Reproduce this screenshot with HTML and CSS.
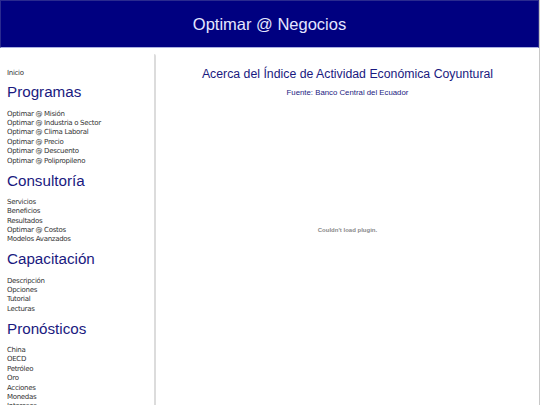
FILE: index.html
```html
<!DOCTYPE html>
<html lang="es">
<head>
<meta charset="utf-8">
<title>Optimar @ Negocios</title>
<link rel="stylesheet" href="styles.css">
</head>
<body>
<div class="page">
  <header class="top">Optimar @ Negocios</header>
  <div class="main">
    <nav class="side">
      <a class="item first">Inicio</a>
      <h2 class="head">Programas</h2>
      <a class="item">Optimar @ Misión</a>
      <a class="item">Optimar @ Industria o Sector</a>
      <a class="item">Optimar @ Clima Laboral</a>
      <a class="item">Optimar @ Precio</a>
      <a class="item">Optimar @ Descuento</a>
      <a class="item">Optimar @ Polipropileno</a>
      <h2 class="head">Consultoría</h2>
      <a class="item">Servicios</a>
      <a class="item">Beneficios</a>
      <a class="item">Resultados</a>
      <a class="item">Optimar @ Costos</a>
      <a class="item">Modelos Avanzados</a>
      <h2 class="head">Capacitación</h2>
      <a class="item">Descripción</a>
      <a class="item">Opciones</a>
      <a class="item">Tutorial</a>
      <a class="item">Lecturas</a>
      <h2 class="head">Pronósticos</h2>
      <a class="item">China</a>
      <a class="item">OECD</a>
      <a class="item">Petróleo</a>
      <a class="item">Oro</a>
      <a class="item">Acciones</a>
      <a class="item">Monedas</a>
      <a class="item">Intereses</a>
    </nav>
    <section class="content">
      <h1 class="title">Acerca del Índice de Actividad Económica Coyuntural</h1>
      <p class="source">Fuente: Banco Central del Ecuador</p>
      <div class="plugin">Couldn't load plugin.</div>
    </section>
  </div>
</div>
</body>
</html>
```
FILE: styles.css
```css
html, body {
  margin: 0;
  padding: 0;
  background: #ffffff;
  overflow: hidden;
}
.page {
  width: 540px;
  height: 405px;
  display: flex;
  flex-direction: column;
  box-sizing: border-box;
  border-right: 1px solid #c8c8c8;
}
.top {
  flex: none;
  height: 48px;
  box-sizing: border-box;
  background: #000080;
  border: 1px solid #2a2a8f;
  border-bottom-color: #aab0e0;
  color: #e4e6ff;
  font-family: "Liberation Sans", Arial, sans-serif;
  font-size: 16.5px;
  display: flex;
  align-items: center;
  justify-content: center;
}
.main {
  flex: 1;
  display: flex;
  min-height: 0;
}
.side {
  width: 147px;
  flex: none;
  margin-top: 6px;
  padding: 15px 0 0 7px;
  border-right: 2px solid #dcdcdc;
  border-top-right-radius: 2px;
  display: flex;
  flex-direction: column;
  font-family: "DejaVu Sans", Verdana, sans-serif;
  font-size: 7px;
  letter-spacing: -0.3px;
  color: #333333;
}
.item {
  display: block;
  line-height: 9.4px;
  height: 9.4px;
  flex: none;
  white-space: nowrap;
}
.head {
  flex: none;
  margin: 4.7px 0 7.2px 0;
  font-family: "Liberation Sans", Arial, sans-serif;
  font-weight: normal;
  font-size: 15.2px;
  letter-spacing: 0;
  line-height: 20px;
  color: #1a1a80;
}
.first + .head {
  margin-top: 4px;
}
.content {
  flex: 1;
  display: flex;
  flex-direction: column;
  align-items: center;
  font-family: "Liberation Sans", Arial, sans-serif;
  color: #1a1a80;
}
.title {
  margin: 18px 0 0 0;
  font-weight: normal;
  font-size: 12.3px;
  line-height: 16px;
}
.source {
  margin: 6px 0 0 0;
  font-size: 7.8px;
  line-height: 10px;
}
.plugin {
  margin-top: 129px;
  font-size: 6px;
  font-weight: bold;
  color: #8a8a8a;
}
```
